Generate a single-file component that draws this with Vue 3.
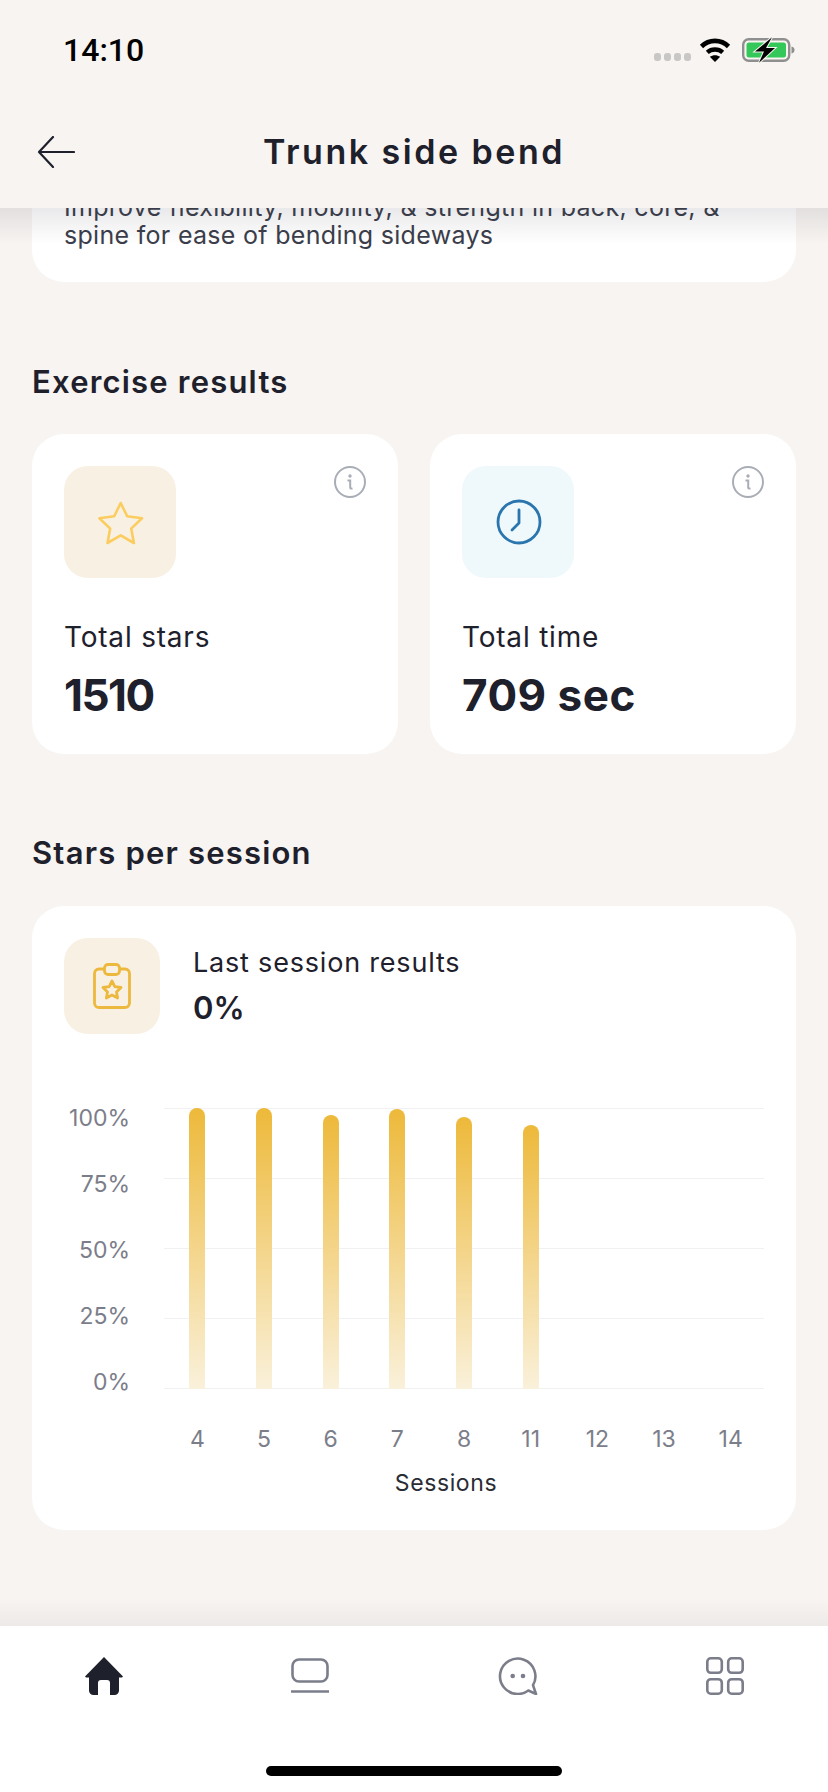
<script setup>
const yLabels = ['100%', '75%', '50%', '25%', '0%']
const bars = [
  { label: '4', height: 281 },
  { label: '5', height: 281 },
  { label: '6', height: 274 },
  { label: '7', height: 280 },
  { label: '8', height: 272 },
  { label: '11', height: 264 },
  { label: '12', height: 0 },
  { label: '13', height: 0 },
  { label: '14', height: 0 }
]
</script>

<template>
  <div class="screen">
    <header class="top">
      <div class="status">
        <span class="time">14:10</span>
        <div class="status-icons">
          <div class="dots"><i></i><i></i><i></i><i></i></div>
          <svg class="wifi" width="32" height="25" viewBox="0 0 32 25">
            <path d="M2.5 9.5C10 2 22 2 29.500 9.500" fill="none" stroke="#000" stroke-width="4.600" />
            <path d="M8.300 15.300C12.500 11.500 19.500 11.500 23.700 15.300" fill="none" stroke="#000" stroke-width="4.400" />
            <path d="M16 25L10.800 19.800C14 17.700 18 17.700 21.200 19.800Z" fill="#000" />
          </svg>
          <svg class="battery" width="53" height="26" viewBox="0 0 53 26">
            <rect x="1.200" y="2.200" width="46" height="21.600" rx="5.500" fill="none" stroke="#8f8f8f" stroke-width="2.400" />
            <rect x="4.500" y="5.500" width="39.500" height="15" rx="2.500" fill="#34c759" />
            <path d="M49.500 9.500C51.500 10 52.500 11 52.500 13S51.500 16 49.500 16.500Z" fill="#8f8f8f" />
            <path d="M30 0.300L13 14.500H22L17 25.800L33 11H24Z" fill="#000" stroke="#f7f4f1" stroke-width="2" paint-order="stroke" />
          </svg>
        </div>
      </div>
      <div class="nav">
        <svg class="back" width="38" height="32" viewBox="0 0 38 32">
          <path d="M37 16H2M16 1L2 16L16 31" fill="none" stroke="#1e202c" stroke-width="2.200" stroke-linecap="round" stroke-linejoin="round" />
        </svg>
        <h1>Trunk side bend</h1>
      </div>
    </header>

    <main class="content">
      <section class="card intro">
        <p>Improve flexibility, mobility, &amp; strength in back, core, &amp;<br />spine for ease of bending sideways</p>
      </section>

      <h2 class="results-title">Exercise results</h2>
      <div class="stats">
        <article class="card stat">
          <div class="stat-top">
            <div class="tile tile-gold">
              <svg class="star-icon" width="46" height="44" viewBox="0 0 46 44">
                <path d="M22.700 2L29.200 15.300L44 17.300L33.200 27.600L35.900 42L22.700 34.400L9.500 42L12.200 27.600L1.400 17.300L16.200 15.300Z" fill="none" stroke="#fbcd5f" stroke-width="2.600" stroke-linejoin="round" />
              </svg>
            </div>
            <svg class="info" width="32" height="32" viewBox="0 0 32 32">
              <circle cx="16" cy="16" r="15" fill="none" stroke="#a9adb6" stroke-width="2" />
              <circle cx="16" cy="10" r="1.700" fill="#a9adb6" />
              <path d="M13.500 14.500H16.200V21.500C16.200 22.500 17 22.800 18.500 22.500" fill="none" stroke="#a9adb6" stroke-width="2" />
            </svg>
          </div>
          <p class="stat-label">Total stars</p>
          <p class="stat-value tight">1510</p>
        </article>
        <article class="card stat">
          <div class="stat-top">
            <div class="tile tile-blue">
              <svg class="clock-icon" width="46" height="46" viewBox="0 0 46 46">
                <circle cx="23" cy="23" r="21" fill="none" stroke="#2a75ad" stroke-width="2.800" />
                <path d="M23 11V24L16 31" fill="none" stroke="#2a75ad" stroke-width="2.800" stroke-linecap="round" stroke-linejoin="round" />
              </svg>
            </div>
            <svg class="info" width="32" height="32" viewBox="0 0 32 32">
              <circle cx="16" cy="16" r="15" fill="none" stroke="#a9adb6" stroke-width="2" />
              <circle cx="16" cy="10" r="1.700" fill="#a9adb6" />
              <path d="M13.500 14.500H16.200V21.500C16.200 22.500 17 22.800 18.500 22.500" fill="none" stroke="#a9adb6" stroke-width="2" />
            </svg>
          </div>
          <p class="stat-label">Total time</p>
          <p class="stat-value">709 sec</p>
        </article>
      </div>

      <h2 class="session-title">Stars per session</h2>
      <section class="card session">
        <div class="session-head">
          <div class="tile tile-small tile-gold">
            <svg width="38" height="46" viewBox="0 0 38 46">
              <path d="M11.500 6H6A4.500 4.500 0 0 0 1.500 10.500V40A4.500 4.500 0 0 0 6 44.500H32A4.500 4.500 0 0 0 36.500 40V10.500A4.500 4.500 0 0 0 32 6H26.500" fill="none" stroke="#ecb93e" stroke-width="2.800" />
              <rect x="11.500" y="1.500" width="15" height="10" rx="3.500" fill="none" stroke="#ecb93e" stroke-width="2.800" />
              <path d="M19 18L21.800 23.600L28 24.500L23.500 28.900L24.600 35L19 32.100L13.400 35L14.500 28.900L10 24.500L16.200 23.600Z" fill="none" stroke="#ecb93e" stroke-width="2.800" stroke-linejoin="round" />
            </svg>
          </div>
          <div class="session-text">
            <p class="session-label">Last session results</p>
            <p class="session-value">0%</p>
          </div>
        </div>

        <div class="chart">
          <div class="y-axis">
            <span v-for="label in yLabels" :key="label">{{ label }}</span>
          </div>
          <div class="plot">
            <div class="grid-lines"><i v-for="label in yLabels" :key="label"></i></div>
            <div class="bars">
              <div v-for="bar in bars" :key="bar.label" class="bar-slot">
                <div v-if="bar.height" class="bar" :style="{ height: bar.height + 'px' }"></div>
              </div>
            </div>
            <div class="x-axis">
              <span v-for="bar in bars" :key="bar.label">{{ bar.label }}</span>
            </div>
            <div class="x-title">Sessions</div>
          </div>
        </div>
      </section>
    </main>

    <footer class="tabbar">
      <nav class="tabs">
        <svg width="38" height="38" viewBox="0 0 38 38">
          <path d="M19 0L38 19.500L37 20.500H34V33.500A4.500 4.500 0 0 1 29.500 38H25V26A3 3 0 0 0 22 23H16A3 3 0 0 0 13 26V38H8.500A4.500 4.500 0 0 1 4 33.500V20.500H1L0 19.500Z" fill="#1e202c" />
        </svg>
        <svg width="38" height="38" viewBox="0 0 38 38">
          <rect x="1.500" y="2.500" width="35" height="22" rx="6.500" fill="none" stroke="#7b7e8a" stroke-width="2.600" />
          <path d="M0 34.500H38" stroke="#7b7e8a" stroke-width="2.600" />
        </svg>
        <svg width="40" height="38" viewBox="0 0 40 38">
          <path d="M19.500 37A17.700 17.700 0 1 1 35 28.200L38 37L30.300 33.500A17.700 17.700 0 0 1 19.500 37Z" fill="none" stroke="#7b7e8a" stroke-width="2.600" stroke-linejoin="round" />
          <circle cx="14.700" cy="19" r="2.300" fill="#7b7e8a" />
          <circle cx="25" cy="19" r="2.300" fill="#7b7e8a" />
        </svg>
        <svg width="38" height="38" viewBox="0 0 38 38">
          <rect x="1.300" y="1.300" width="14.500" height="14.500" rx="3.500" fill="none" stroke="#7b7e8a" stroke-width="2.600" />
          <rect x="22.200" y="1.300" width="14.500" height="14.500" rx="3.500" fill="none" stroke="#7b7e8a" stroke-width="2.600" />
          <rect x="1.300" y="22.200" width="14.500" height="14.500" rx="3.500" fill="none" stroke="#7b7e8a" stroke-width="2.600" />
          <rect x="22.200" y="22.200" width="14.500" height="14.500" rx="3.500" fill="none" stroke="#7b7e8a" stroke-width="2.600" />
        </svg>
      </nav>
      <div class="home-indicator"></div>
    </footer>
  </div>
</template>

<style scoped>
.screen {
  width: 828px;
  height: 1792px;
  display: flex;
  flex-direction: column;
  overflow: hidden;
  background: #f7f4f1;
  font-family: Inter, "Open Sans", sans-serif;
  color: #1e202c;
}
p, h1, h2 { margin: 0; }

.top {
  position: relative;
  height: 208px;
  flex: none;
  z-index: 2;
  background: #f7f4f1;
}
.top::after {
  content: "";
  position: absolute;
  left: 0;
  right: 0;
  top: 100%;
  height: 36px;
  background: linear-gradient(rgba(40, 40, 60, 0.1), rgba(40, 40, 60, 0));
}
.status {
  height: 100px;
  display: flex;
  justify-content: space-between;
  padding: 33px 33px 0 63px;
  box-sizing: border-box;
}
.time {
  font-family: Roboto, Inter, sans-serif;
  font-size: 32px;
  line-height: 34px;
  font-weight: 500;
  color: #000;
}
.status-icons {
  display: flex;
  align-items: flex-start;
  gap: 11px;
  padding-top: 4px;
}
.dots {
  display: flex;
  gap: 2.500px;
  margin-top: 16px;
  margin-right: -3px;
}
.dots i {
  width: 7.500px;
  height: 8px;
  border-radius: 3px;
  background: #c9c7c5;
}
.wifi { display: block; }
.battery { display: block; }

.nav {
  position: relative;
  height: 104px;
  display: flex;
  align-items: center;
  justify-content: center;
}
.back {
  position: absolute;
  left: 37px;
  top: 36px;
}
.nav h1 {
  font-size: 34px;
  line-height: 40px;
  font-weight: 600;
  letter-spacing: 2.500px;
}

.content {
  flex: 1;
  min-height: 0;
  padding: 0 32px;
  overflow: hidden;
}
.card {
  background: #fff;
  border-radius: 32px;
}
.intro {
  height: 74px;
  box-sizing: border-box;
  display: flex;
  align-items: flex-end;
  padding: 0 32px 33px;
  border-radius: 0 0 32px 32px;
  overflow: hidden;
}
.intro p {
  font-size: 25px;
  line-height: 28px;
  color: #3b3e4a;
  letter-spacing: 0.300px;
  white-space: nowrap;
}

.results-title,
.session-title {
  font-size: 31px;
  line-height: 36px;
  font-weight: 600;
  letter-spacing: 1.200px;
}
.results-title { margin-top: 82px; }
.session-title { margin-top: 81px; }

.stats {
  display: flex;
  gap: 32px;
  margin-top: 34px;
}
.stat {
  width: 366px;
  height: 320px;
  padding: 32px;
  box-sizing: border-box;
}
.stat-top {
  display: flex;
  justify-content: space-between;
  align-items: flex-start;
}
.info { display: block; }
.tile {
  width: 112px;
  height: 112px;
  border-radius: 24px;
  display: flex;
  align-items: center;
  justify-content: center;
  flex: none;
}
.tile-small {
  width: 96px;
  height: 96px;
}
.tile-gold { background: #f8f0e3; }
.tile-blue { background: #eff8fb; }
.star-icon { margin: 2px 0 0 2px; }
.clock-icon { margin-left: 2px; }
.stat-label {
  margin-top: 42px;
  font-size: 28px;
  line-height: 34px;
  letter-spacing: 0.800px;
}
.stat-value {
  margin-top: 15px;
  font-size: 44px;
  line-height: 52px;
  font-weight: 700;
  letter-spacing: 0.500px;
}
.stat-value.tight { letter-spacing: -1.500px; }

.session {
  margin-top: 35px;
  height: 624px;
  padding: 32px;
  box-sizing: border-box;
}
.session-head {
  display: flex;
  gap: 33px;
}
.session-label {
  margin-top: 7px;
  font-size: 27px;
  line-height: 36px;
  letter-spacing: 0.800px;
}
.session-value {
  margin-top: 8px;
  font-size: 31px;
  line-height: 38px;
  font-weight: 600;
}

.chart {
  display: flex;
  margin-top: 74px;
  height: 400px;
}
.y-axis {
  width: 66px;
  margin-top: -5px;
  margin-right: 34px;
  height: 296px;
  display: flex;
  flex-direction: column;
  gap: 36px;
  align-items: flex-end;
  font-size: 23px;
  line-height: 30px;
  color: #7b7e8a;
}
.plot {
  position: relative;
  width: 600px;
}
.grid-lines {
  height: 281px;
  display: flex;
  flex-direction: column;
  justify-content: space-between;
}
.grid-lines i {
  display: block;
  height: 1px;
  background: #f1f1f3;
}
.bars {
  position: absolute;
  left: 0;
  right: 0;
  top: 0;
  height: 281px;
  display: flex;
}
.bar-slot {
  flex: 1;
  display: flex;
  justify-content: center;
  align-items: flex-end;
}
.bar {
  width: 16px;
  border-radius: 8px 8px 0 0;
  background: linear-gradient(#edb93a, #faf1db);
}
.x-axis {
  display: flex;
  margin-top: 35px;
  font-size: 23px;
  line-height: 30px;
  color: #7b7e8a;
}
.x-axis span {
  flex: 1;
  text-align: center;
}
.x-title {
  margin-top: 14px;
  padding-right: 36px;
  text-align: center;
  font-size: 23px;
  line-height: 30px;
  letter-spacing: 0.600px;
  color: #2a2c36;
}

.tabbar {
  position: relative;
  flex: none;
  height: 166px;
  background: #fff;
  display: flex;
  flex-direction: column;
  align-items: center;
}
.tabbar::before {
  content: "";
  position: absolute;
  left: 0;
  right: 0;
  bottom: 100%;
  height: 28px;
  background: linear-gradient(rgba(40, 40, 70, 0), rgba(40, 40, 70, 0.05));
}
.tabs {
  width: 100%;
  box-sizing: border-box;
  padding: 31px 84px 0 85px;
  display: flex;
  justify-content: space-between;
  align-items: flex-start;
}
.tabs svg { display: block; }
.home-indicator {
  width: 296px;
  height: 10px;
  border-radius: 5px;
  background: #000;
  margin-top: 71px;
}
</style>
